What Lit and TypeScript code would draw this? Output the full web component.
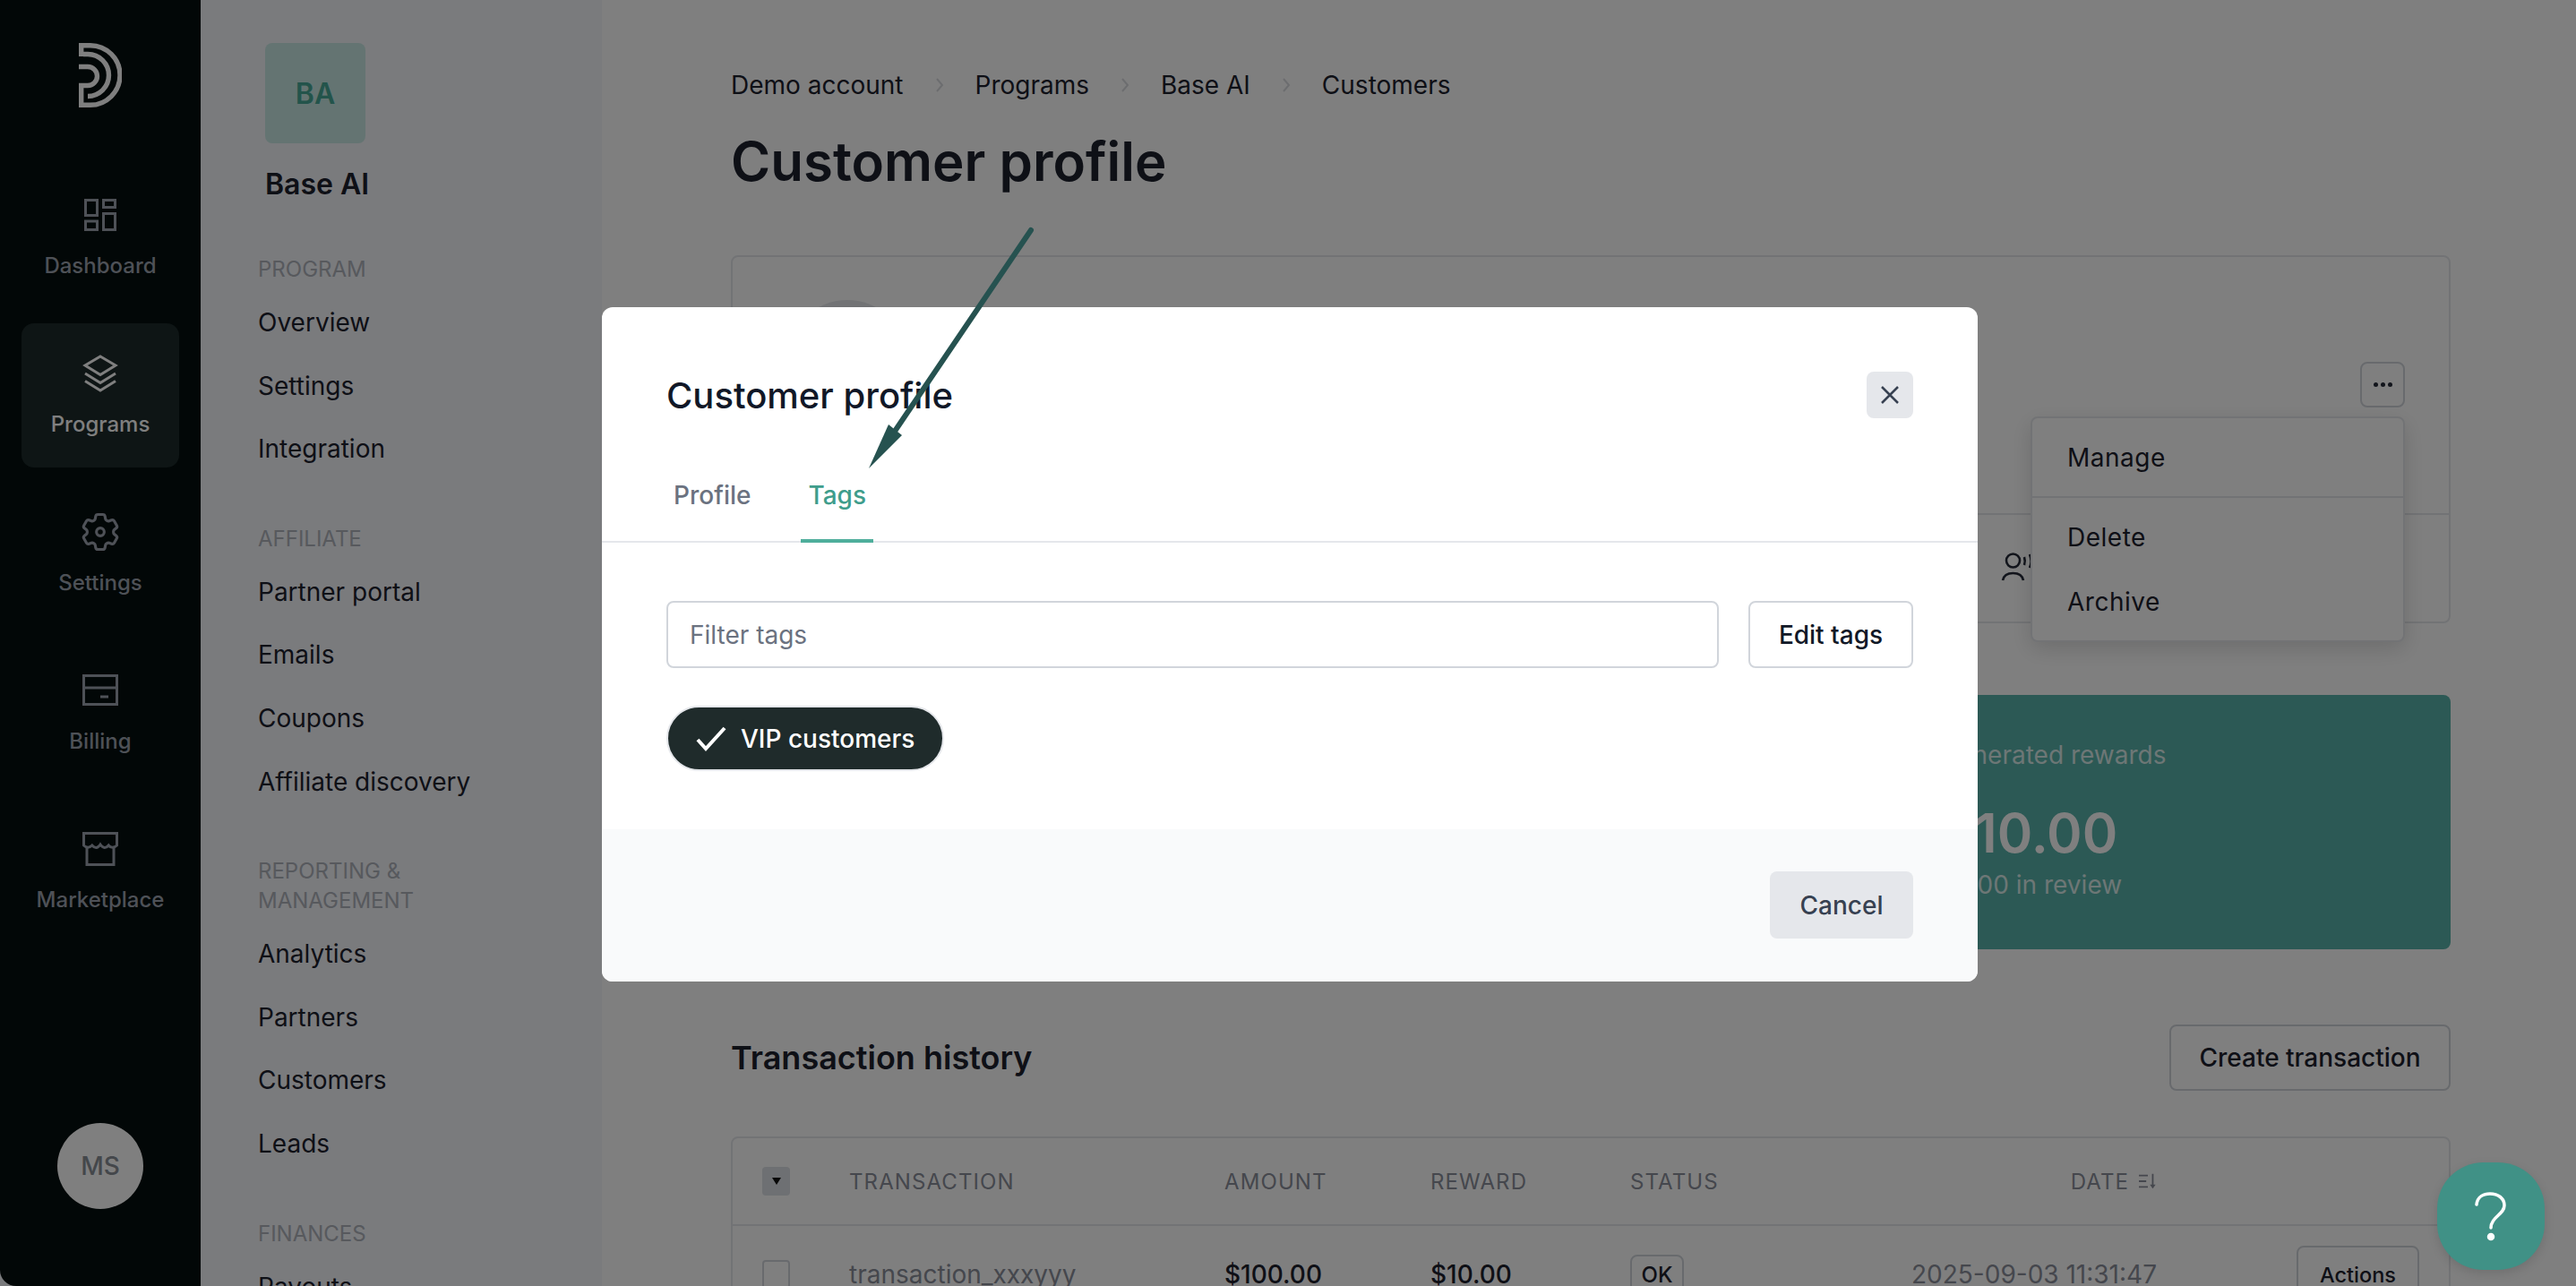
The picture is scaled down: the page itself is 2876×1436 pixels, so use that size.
import { LitElement, css, html, svg } from 'lit';
import { customElement } from 'lit/decorators.js';

const RAIL = [
  {
    label: 'Dashboard',
    icon: svg`<rect x="7.5" y="7.5" width="13" height="17" /><rect x="27.5" y="7.5" width="13" height="8" /><rect x="7.5" y="31" width="13" height="9.5" /><rect x="27.5" y="22.5" width="13" height="18" />`,
  },
  {
    label: 'Programs',
    active: true,
    icon: svg`<path d="M24 5 41 15 24 25.5 7 15Z" /><path d="M7 24 24 34.5 41 24" /><path d="M7 32.5 24 43 41 32.5" />`,
  },
  {
    label: 'Settings',
    icon: svg`<g transform="translate(-2 -2) scale(2.167)" stroke-width="1.45"><path d="M9.594 3.94c.09-.542.56-.94 1.11-.94h2.593c.55 0 1.02.398 1.11.94l.213 1.281c.063.374.313.686.645.87.074.04.147.083.22.127.325.196.72.257 1.075.124l1.217-.456a1.125 1.125 0 0 1 1.37.49l1.296 2.247a1.125 1.125 0 0 1-.26 1.431l-1.003.827c-.293.241-.438.613-.43.992a7.723 7.723 0 0 1 0 .255c-.008.378.137.75.43.991l1.004.827c.424.35.534.955.26 1.43l-1.298 2.247a1.125 1.125 0 0 1-1.369.491l-1.217-.456c-.355-.133-.75-.072-1.076.124a6.47 6.47 0 0 1-.22.128c-.331.183-.581.495-.644.869l-.213 1.281c-.09.543-.56.94-1.11.94h-2.594c-.55 0-1.019-.398-1.11-.94l-.213-1.281c-.062-.374-.312-.686-.644-.87a6.52 6.52 0 0 1-.22-.127c-.325-.196-.72-.257-1.076-.124l-1.217.456a1.125 1.125 0 0 1-1.369-.49l-1.297-2.247a1.125 1.125 0 0 1 .26-1.431l1.004-.827c.292-.24.437-.613.43-.991a6.932 6.932 0 0 1 0-.255c.007-.38-.138-.751-.43-.992l-1.004-.827a1.125 1.125 0 0 1-.26-1.43l1.297-2.247a1.125 1.125 0 0 1 1.37-.491l1.216.456c.356.133.751.072 1.076-.124.072-.044.146-.086.22-.128.332-.183.582-.495.644-.869l.214-1.28Z" /><circle cx="12" cy="12" r="2" /></g>`,
  },
  {
    label: 'Billing',
    icon: svg`<rect x="5.5" y="7.5" width="37" height="32" /><path d="M5.5 21h37M24 31h9" />`,
  },
  {
    label: 'Marketplace',
    icon: svg`<path d="M5.5 6.5h37V20c-3 3-7 3-9.3 0-3 3.6-6 3.6-9.200-1-3 4.600-6 4.600-9.200 1-3 3-6.300 3-9.300 0Z" /><path d="M9 22v19.500h30V22" />`,
  },
];

const NAV = [
  { title: ['Program'], items: ['Overview', 'Settings', 'Integration'] },
  { title: ['Affiliate'], items: ['Partner portal', 'Emails', 'Coupons', 'Affiliate discovery'] },
  { title: ['Reporting &', 'Management'], items: ['Analytics', 'Partners', 'Customers', 'Leads'] },
  { title: ['Finances'], items: ['Payouts'] },
];

const CRUMBS = ['Demo account', 'Programs', 'Base AI', 'Customers'];

@customElement('app-root')
export class AppRoot extends LitElement {
  static styles = css`
    :host {
      display: block;
      position: relative;
      height: 100vh;
      overflow: hidden;
      background: #f4f6fa;
      color: #1c202d;
      font-family: Inter, "Liberation Sans", sans-serif;
      font-size: 28px;
    }

    * {
      box-sizing: border-box;
    }

    .layout {
      display: flex;
      height: 100%;
    }

    /* icon rail */
    .rail {
      display: flex;
      flex: none;
      flex-direction: column;
      align-items: center;
      width: 224px;
      padding-top: 48px;
      background: #040e0e;
      border-bottom-left-radius: 18px;
    }

    .logo {
      display: block;
      width: 48px;
      height: 72px;
      margin-bottom: 64px;
    }

    .rail-item {
      display: flex;
      flex-direction: column;
      align-items: center;
      width: 176px;
      height: 161px;
      margin-bottom: 16px;
      padding-top: 32px;
      border-radius: 14px;
      color: #9ca3af;
      font-size: 24px;
      font-weight: 500;
      line-height: 36px;
    }

    .rail-item.active {
      background: #1c2a2a;
      color: #fff;
    }

    .rail-item svg {
      display: block;
      width: 48px;
      height: 48px;
      margin-bottom: 15px;
      fill: none;
      stroke: currentColor;
      stroke-width: 3;
    }

    .me {
      display: flex;
      align-items: center;
      justify-content: center;
      width: 96px;
      height: 96px;
      margin-top: auto;
      margin-bottom: 86px;
      border-radius: 50%;
      background: #fff;
      color: #888e96;
      font-size: 28px;
      font-weight: 500;
    }

    /* section nav */
    .subnav {
      flex: none;
      width: 448px;
      padding: 48px 0 0 64px;
    }

    .badge {
      display: flex;
      align-items: center;
      justify-content: center;
      width: 112px;
      height: 112px;
      margin-left: 8px;
      border-radius: 8px;
      background: #c8e8e4;
      color: #46a896;
      font-size: 32px;
      font-weight: 600;
    }

    .brand {
      margin: 26px 0 0 8px;
      font-size: 32px;
      font-weight: 600;
      line-height: 40px;
    }

    .group {
      margin-bottom: 48px;
    }

    .brand + .group {
      margin-top: 58px;
    }

    .group h4 {
      margin: 0 0 8px;
      color: #aeb2ba;
      font-size: 24px;
      font-weight: 400;
      line-height: 33px;
      text-transform: uppercase;
    }

    .group a {
      display: block;
      line-height: 70.6px;
    }

    /* main column */
    .main {
      flex: 1;
      min-width: 0;
      padding: 77px 140px 0 144px;
      background: #fff;
    }

    .crumbs {
      display: flex;
      align-items: center;
      gap: 35px;
      height: 36px;
    }

    .crumbs svg {
      width: 10px;
      height: 18px;
      fill: none;
      stroke: #d8dade;
      stroke-width: 2;
    }

    h1 {
      margin: 31px 0 0;
      font-size: 60px;
      font-weight: 600;
      line-height: 72px;
    }

    .card {
      position: relative;
      height: 411px;
      margin-top: 69px;
      border: 2px solid #e5e7eb;
      border-radius: 8px;
    }

    .avatar {
      position: absolute;
      top: 48px;
      left: 60px;
      width: 136px;
      height: 136px;
      border-radius: 50%;
      background: #e5e7eb;
    }

    .card-top {
      display: flex;
      justify-content: flex-end;
      height: 288px;
      padding: 117px 49px 0 0;
      border-bottom: 2px solid #e5e7eb;
    }

    .dots {
      display: flex;
      align-items: center;
      justify-content: center;
      gap: 3px;
      width: 50px;
      height: 51px;
      border: 2px solid #d1d5db;
      border-radius: 8px;
    }

    .dots i {
      width: 5px;
      height: 5px;
      border-radius: 50%;
      background: #252a38;
    }

    .card-foot {
      padding: 42px 0 0 1416px;
    }

    .card-foot svg {
      display: block;
      width: 40px;
      height: 32px;
      fill: none;
      stroke: #252a38;
      stroke-width: 2.600;
    }

    .menu {
      position: absolute;
      top: 178px;
      right: 49px;
      width: 418px;
      height: 252px;
      border: 2px solid #e5e7eb;
      border-radius: 8px;
      background: #fff;
      box-shadow: 0 8px 24px rgba(0, 0, 0, 0.14);
      letter-spacing: 0.5px;
    }

    .menu a {
      display: block;
      padding-left: 39px;
      line-height: 72px;
    }

    .menu .first {
      height: 89px;
      padding-top: 8px;
      border-bottom: 2px solid #e5e7eb;
    }

    .menu .rest {
      padding-top: 8px;
    }

    .stats {
      display: grid;
      grid-template-columns: repeat(3, 1fr);
      gap: 32px;
      height: 284px;
      margin-top: 80px;
    }

    .stat {
      border: 2px solid #e5e7eb;
      border-radius: 8px;
    }

    .stat.green {
      padding: 49px 48px 0;
      border: 0;
      background: #58b2aa;
      color: rgba(255, 255, 255, 0.78);
      line-height: 36px;
    }

    .stat .amount {
      margin: 33px 0 4px;
      color: #fff;
      font-size: 60px;
      font-weight: 600;
      line-height: 72px;
    }

    .section-head {
      display: flex;
      align-items: center;
      justify-content: space-between;
      margin-top: 84px;
    }

    h2 {
      margin: 0;
      font-size: 36px;
      font-weight: 600;
    }

    .btn {
      display: flex;
      align-items: center;
      justify-content: center;
      border: 2px solid #d1d5db;
      border-radius: 8px;
      background: #fff;
      color: #1c202d;
      font-family: inherit;
      font-size: 28px;
      font-weight: 500;
    }

    .create {
      width: 314px;
      height: 74px;
    }

    .table {
      margin-top: 51px;
      border: 2px solid #e5e7eb;
      border-radius: 8px;
    }

    .tr {
      display: grid;
      grid-template-columns: 130px 419px 230px 223px 200px 1fr 326px;
      align-items: center;
    }

    .thead {
      height: 98px;
      border-bottom: 2px solid #e5e7eb;
      color: #8a8e9a;
      font-size: 24px;
      font-weight: 400;
      letter-spacing: 1.1px;
    }

    .tbody {
      height: 108px;
      font-size: 28px;
    }

    .select {
      display: flex;
      align-items: center;
      justify-content: center;
      width: 31px;
      height: 32px;
      margin-left: 33px;
      border-radius: 4px;
      background: #dce0e6;
    }

    .select::after {
      content: "";
      border-top: 8px solid #111;
      border-right: 5px solid transparent;
      border-left: 5px solid transparent;
    }

    .check {
      width: 31px;
      height: 32px;
      margin-left: 33px;
      border: 2px solid #d1d5db;
      border-radius: 4px;
    }

    .date {
      display: flex;
      align-items: center;
      justify-content: flex-end;
      gap: 11px;
    }

    .date svg {
      width: 20px;
      height: 20px;
      fill: none;
      stroke: #8a8e9a;
      stroke-width: 2;
    }

    .muted {
      color: #8a8e9a;
    }

    .strong {
      font-weight: 500;
    }

    .ok {
      display: inline-flex;
      align-items: center;
      justify-content: center;
      width: 60px;
      height: 44px;
      border: 2px solid #d1d5db;
      border-radius: 8px;
      font-size: 24px;
      font-weight: 500;
    }

    .actions {
      width: 137px;
      height: 64px;
      margin-left: 156px;
      font-size: 23.5px;
    }

    /* dialog */
    .overlay {
      position: absolute;
      inset: 0;
      display: flex;
      align-items: flex-start;
      justify-content: center;
      padding: 343px 0 0 4px;
      background: rgba(0, 0, 0, 0.5);
    }

    .modal {
      width: 1536px;
      border-radius: 12px;
      background: #fff;
      overflow: hidden;
      color: #111827;
    }

    .modal-head {
      display: flex;
      align-items: center;
      justify-content: space-between;
      padding: 72px 72px 0;
    }

    .modal-head h3 {
      margin: 0;
      font-size: 40px;
      font-weight: 500;
    }

    .close {
      display: flex;
      align-items: center;
      justify-content: center;
      width: 52px;
      height: 52px;
      border-radius: 8px;
      background: #e5e7eb;
    }

    .close svg {
      width: 22px;
      height: 22px;
      fill: none;
      stroke: #374151;
      stroke-width: 2.500;
    }

    .tabs {
      display: flex;
      gap: 48px;
      height: 106px;
      margin-top: 33px;
      padding-left: 72px;
      border-bottom: 2px solid #e5e7eb;
    }

    .tab {
      display: flex;
      align-items: center;
      height: 106px;
      padding: 0 8px;
      color: #6b7280;
      font-weight: 500;
    }

    .tab.active {
      border-bottom: 4px solid #4fae9c;
      padding-top: 4px;
      color: #3f9d8c;
    }

    .modal-body {
      padding: 65px 72px;
    }

    .filter-row {
      display: flex;
      gap: 33px;
    }

    .filter-row input {
      flex: 1;
      min-width: 0;
      height: 75px;
      padding: 0 24px;
      border: 2px solid #d1d5db;
      border-radius: 8px;
      color: #111827;
      font-family: inherit;
      font-size: 28px;
    }

    .filter-row input::placeholder {
      color: #6b7280;
      opacity: 1;
    }

    .edit {
      width: 184px;
      height: 75px;
      color: #111827;
    }

    .chip {
      display: flex;
      align-items: center;
      gap: 16px;
      width: fit-content;
      height: 73px;
      margin-top: 42px;
      padding: 0 31px;
      border: 2px solid #e5e7eb;
      border-radius: 37px;
      background: #1f2b2b;
      color: #fff;
      font-weight: 500;
    }

    .chip svg {
      width: 34px;
      height: 28px;
      fill: none;
      stroke: #fff;
      stroke-width: 4;
    }

    .modal-foot {
      display: flex;
      justify-content: flex-end;
      height: 170px;
      padding: 47px 72px 0 0;
      background: #f9fafb;
    }

    .cancel {
      width: 160px;
      height: 75px;
      border: 0;
      background: #e5e7eb;
      color: #374151;
    }

    /* floating over everything */
    .help {
      position: absolute;
      top: 1298px;
      left: 2721px;
      display: flex;
      align-items: center;
      justify-content: center;
      width: 120px;
      height: 120px;
      border-radius: 43%;
      background: #409186;
      box-shadow: 0 4px 12px rgba(0, 0, 0, 0.12);
    }

    .help svg {
      width: 40px;
      height: 56px;
      fill: none;
      stroke: #fff;
      stroke-width: 3.5;
      stroke-linecap: round;
    }

    .arrow {
      position: absolute;
      top: 0;
      left: 0;
      width: 2876px;
      height: 1436px;
      pointer-events: none;
    }
  `;

  renderRail() {
    return html`
      <aside class="rail">
        <svg class="logo" viewBox="0 0 48 72" fill="none" stroke="#fff" stroke-width="5.400">
          <path d="M2.700 15V2.700H12.700a33 33 0 0 1 0 66.600H2.700V47.500H10a10.500 10.500 0 0 0 0-21H0" />
          <path d="M5 12.500H10a23.500 23.500 0 0 1 0 47H12" />
        </svg>
        ${RAIL.map(
          item => html`
            <div class="rail-item ${item.active ? 'active' : ''}">
              <svg viewBox="0 0 48 48">${item.icon}</svg>
              ${item.label}
            </div>
          `,
        )}
        <div class="me">MS</div>
      </aside>
    `;
  }

  renderNav() {
    return html`
      <nav class="subnav">
        <div class="badge">BA</div>
        <div class="brand">Base AI</div>
        ${NAV.map(
          group => html`
            <div class="group">
              <h4>${group.title.map(line => html`${line}<br />`)}</h4>
              ${group.items.map(item => html`<a>${item}</a>`)}
            </div>
          `,
        )}
      </nav>
    `;
  }

  renderMain() {
    return html`
      <main class="main">
        <div class="crumbs">
          ${CRUMBS.map(
            (crumb, i) => html`
              ${i > 0
                ? html`<svg viewBox="0 0 10 18"><path d="M2 2l6 7-6 7" /></svg>`
                : ''}
              <span>${crumb}</span>
            `,
          )}
        </div>
        <h1>Customer profile</h1>

        <section class="card">
          <div class="avatar"></div>
          <div class="card-top">
            <div class="dots"><i></i><i></i><i></i></div>
          </div>
          <div class="card-foot">
            <svg viewBox="0 0 40 32">
              <circle cx="13.500" cy="9" r="7.500" />
              <path d="M2 31c1-5 5-8 11.500-8S24 26 25 31" />
              <path d="M26 5c1 3 1 6 0 9M32 2c2 5 2 11 0 15" />
            </svg>
          </div>
          <div class="menu">
            <div class="first"><a>Manage</a></div>
            <div class="rest"><a>Delete</a><a>Archive</a></div>
          </div>
        </section>

        <section class="stats">
          <div class="stat"></div>
          <div class="stat"></div>
          <div class="stat green">
            <div>Generated rewards</div>
            <div class="amount">$10.00</div>
            <div>$0.00 in review</div>
          </div>
        </section>

        <div class="section-head">
          <h2>Transaction history</h2>
          <button class="btn create">Create transaction</button>
        </div>

        <section class="table">
          <div class="tr thead">
            <div class="select"></div>
            <div>TRANSACTION</div>
            <div>AMOUNT</div>
            <div>REWARD</div>
            <div>STATUS</div>
            <div class="date">
              DATE
              <svg viewBox="0 0 22 20">
                <path d="M0 3h11M0 10h9M0 17h11M17 1v16" />
                <path d="M13.500 14l3.500 5 3.500-5z" fill="#8a8e9a" stroke="none" />
              </svg>
            </div>
            <div></div>
          </div>
          <div class="tr tbody">
            <div class="check"></div>
            <div class="muted">transaction_xxxyyy</div>
            <div class="strong">$100.00</div>
            <div class="strong">$10.00</div>
            <div><span class="ok">OK</span></div>
            <div class="date muted">2025-09-03 11:31:47</div>
            <div><button class="btn actions">Actions</button></div>
          </div>
        </section>
      </main>
    `;
  }

  renderDialog() {
    return html`
      <div class="overlay">
        <div class="modal">
          <div class="modal-head">
            <h3>Customer profile</h3>
            <div class="close">
              <svg viewBox="0 0 22 22"><path d="M2 2l18 18M20 2 2 20" /></svg>
            </div>
          </div>
          <div class="tabs">
            <div class="tab">Profile</div>
            <div class="tab active">Tags</div>
          </div>
          <div class="modal-body">
            <div class="filter-row">
              <input placeholder="Filter tags" />
              <button class="btn edit">Edit tags</button>
            </div>
            <div class="chip">
              <svg viewBox="0 0 34 28"><path d="M2 15l9 10L32 2" /></svg>
              VIP customers
            </div>
          </div>
          <div class="modal-foot">
            <button class="btn cancel">Cancel</button>
          </div>
        </div>
      </div>
    `;
  }

  render() {
    return html`
      <div class="layout">
        ${this.renderRail()} ${this.renderNav()} ${this.renderMain()}
      </div>
      ${this.renderDialog()}
      <div class="help">
        <svg viewBox="0 0 40 56">
          <path d="M4 15C5 6 12 3 19 3c9 0 16 5 16 13 0 10-15 13-15 25" />
          <circle cx="20" cy="51" r="2.500" fill="#fff" />
        </svg>
      </div>
      <svg class="arrow" viewBox="0 0 2876 1436">
        <path d="M1151 257 1000 480" stroke="#265250" stroke-width="6" stroke-linecap="round" />
        <path d="M970 523 992 474 1007 486Z" fill="#265250" />
      </svg>
    `;
  }
}
